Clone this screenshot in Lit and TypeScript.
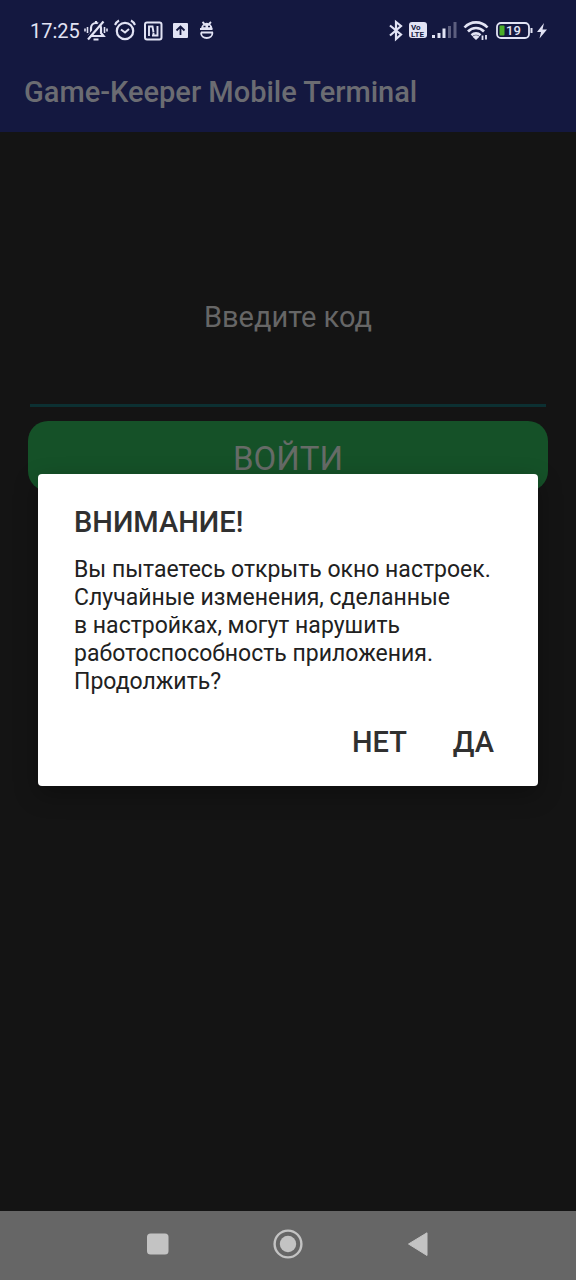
import { LitElement, html, css } from "lit";
import { customElement, state } from "lit/decorators.js";

@customElement("status-bar")
class StatusBar extends LitElement {
  static styles = css`
    :host {
      display: flex;
      justify-content: space-between;
      align-items: center;
      height: 60px;
      padding: 2px 29px 0 30px;
      box-sizing: border-box;
      color: #e2e3f4;
      font-size: 20px;
    }
    .group {
      display: flex;
      align-items: center;
      gap: 4px;
    }
    svg {
      display: block;
      fill: none;
      stroke: currentColor;
      stroke-width: 2;
    }
    .solid {
      fill: currentColor;
      stroke: none;
    }
    .badge,
    .level {
      font-family: Roboto, sans-serif;
      stroke: none;
    }
    .badge {
      fill: #141840;
      font-size: 8px;
      font-weight: 700;
    }
    .level {
      fill: currentColor;
      font-size: 13px;
      font-weight: 500;
    }
  `;

  render() {
    return html`
      <div class="group">
        <span>17:25</span>
        <svg width="24" height="24" viewBox="0 1 24 24" aria-label="Без звука">
          <path d="M4.500 18h15l-2.500-3v-5a5 5 0 0 0-10 0v5l-2.500 3M9.500 21.500h5M12 5V3" stroke-width="2.200" />
          <path d="M2.500 20.500L18 2.500" stroke="#141840" stroke-width="2.200" />
          <path d="M4 21.500L19.500 3.500" stroke-width="2.200" />
          <path d="M3.500 9v6M1 10.500v3M20.500 9v6M23 10.500v3" stroke-width="1.600" />
        </svg>
        <svg width="24" height="24" viewBox="-1 1 24 24" aria-label="Будильник">
          <circle cx="12" cy="13" r="8.200" stroke-width="2.200" />
          <path d="M2 7a9 9 0 0 1 4-4.500M22 7a9 9 0 0 0-4-4.500M8 11.500l4 3 4-3.500" />
        </svg>
        <svg width="24" height="24" viewBox="-1 1 24 24" aria-label="NFC">
          <rect x="4" y="4.500" width="16.500" height="17" rx="2" />
          <path d="M8 18V8.500h3.500l1 6M11 17.500h5.500V8M12.500 15v2.500" stroke-width="1.900" />
        </svg>
        <svg width="24" height="24" viewBox="-1 1 24 24" aria-label="Загрузка">
          <rect class="solid" x="4" y="5" width="15" height="15" rx="1" />
          <path d="M11.500 17V9M7.500 12.500l4-4 4 4" stroke="#141840" stroke-width="1.800" />
        </svg>
        <svg width="24" height="24" viewBox="0 1 24 24" aria-label="Уведомление">
          <path class="solid" d="M5 10.500a5.800 6.500 0 0 1 11.500 0z" />
          <path d="M6.500 4l2 2M15 4l-2 2M4 11h12.500M5 14.500h12M5 14.500c0 3.500 2.500 5.500 5.700 5.500s5.800-2 5.800-5.500" stroke-width="1.800" />
          <path d="M7.500 8.500h2M12 8.500h2" stroke="#141840" stroke-width="1.500" />
        </svg>
      </div>
      <div class="group">
        <svg width="16" height="24" viewBox="1 1 16 24" aria-label="Bluetooth">
          <path d="M2 7.500l11 9L8 21V4l5 4L2 17.500" stroke-width="2.200" />
        </svg>
        <svg width="18" height="24" viewBox="0 1 18 24" aria-label="VoLTE">
          <rect class="solid" x="0" y="4" width="18" height="16" rx="3" />
          <text class="badge" x="2" y="11.500">Vo</text>
          <text class="badge" x="2" y="18.500">LTE</text>
        </svg>
        <svg width="27" height="24" viewBox="0 1 27 24" aria-label="Сигнал">
          <path d="M2.500 20v-3M8 20v-5M13 20v-9.500" stroke-width="3" />
          <path d="M18.500 20V8M24 20V4" stroke-width="3" opacity="0.35" />
        </svg>
        <svg width="29" height="24" viewBox="1 1 29 24" aria-label="Wi-Fi">
          <path d="M3.500 9.500a15.500 15.500 0 0 1 23 0M7 13.500a11 11 0 0 1 16 0M10.500 17.200a6.500 6.500 0 0 1 9 0" stroke-width="2.600" />
          <path class="solid" d="M11.500 18.800a5 5 0 0 1 7 0L15 22z" />
          <path d="M21.500 22v-4.500M25 17v4.500" stroke-width="1.800" />
        </svg>
        <svg width="38" height="24" viewBox="0 1 38 24" aria-label="Заряд 19%">
          <rect x="2" y="5" width="32" height="15" rx="4" stroke-width="1.800" />
          <rect x="4.500" y="7.500" width="5" height="10" rx="1" fill="#4caf28" stroke="none" />
          <path d="M36.500 10v5" />
          <text class="level" x="11" y="17">19</text>
        </svg>
        <svg width="10" height="24" viewBox="0 1 10 24" aria-label="Зарядка">
          <path class="solid" d="M7 5L0 14h4l-1.500 6.500L10 11.500H5.500z" />
        </svg>
      </div>
    `;
  }
}

@customElement("nav-bar")
class NavBar extends LitElement {
  static styles = css`
    :host {
      display: flex;
      justify-content: center;
      align-items: center;
      gap: 82px;
      height: 69px;
      background: #666666;
    }
    button {
      display: flex;
      justify-content: center;
      width: 48px;
      padding: 8px 0 12px;
      border: 0;
      background: none;
      color: #c3c3c3;
    }
    svg {
      display: block;
      fill: currentColor;
    }
  `;

  render() {
    return html`
      <button aria-label="Недавние">
        <svg width="32" height="32" viewBox="0 0 32 32">
          <rect x="5" y="5.500" width="21.500" height="21" rx="3.500" />
        </svg>
      </button>
      <button aria-label="Домой">
        <svg width="32" height="32" viewBox="0 0 32 32">
          <circle cx="16" cy="16" r="13.400" fill="none" stroke="currentColor" stroke-width="2.400" />
          <circle cx="16" cy="16" r="8.200" />
        </svg>
      </button>
      <button aria-label="Назад">
        <svg width="32" height="32" viewBox="0 0 32 32">
          <path d="M6.500 16L25 4.800V27.500z" stroke="currentColor" stroke-linejoin="round" />
        </svg>
      </button>
    `;
  }
}

@customElement("app-root")
class AppRoot extends LitElement {
  @state() private warning = true;

  static styles = css`
    :host {
      display: flex;
      flex-direction: column;
      position: relative;
      min-height: 100vh;
      background: #141414;
      font-family: Roboto, sans-serif;
    }
    header {
      background: #141840;
    }
    h1 {
      margin: 0;
      padding: 12px 24px 20px;
      color: #6b6c72;
      font-size: 29px;
      line-height: 40px;
      font-weight: 500;
    }
    main {
      flex: 1;
      display: flex;
      flex-direction: column;
      padding: 165px 28px 0;
    }
    label {
      color: #666666;
      font-size: 29px;
      line-height: 40px;
      text-align: center;
    }
    .code {
      height: 70px;
      margin: 0 2px 14px;
      padding: 0;
      box-sizing: border-box;
      border: 0;
      border-bottom: 3px solid #0c3032;
      outline: 0;
      background: none;
      color: #666666;
      font: inherit;
      font-size: 29px;
      text-align: center;
    }
    .enter {
      height: 70px;
      padding: 4px 0 0;
      border: 0;
      border-radius: 20px;
      background: #155128;
      color: #666b67;
      font: inherit;
      font-size: 33px;
    }
    .overlay {
      position: absolute;
      inset: 0;
      display: flex;
      align-items: center;
      padding: 49px 38px 69px;
    }
    dialog {
      position: static;
      flex: 1;
      box-sizing: border-box;
      margin: 0;
      padding: 28px 25px 20px 36px;
      border: 0;
      border-radius: 4px;
      background: #ffffff;
      color: #212121;
      box-shadow: 0 8px 24px rgba(0, 0, 0, 0.3);
    }
    h2 {
      margin: 0 0 14px;
      color: #303030;
      font-size: 29px;
      line-height: 40px;
      font-weight: 500;
    }
    p {
      margin: 0;
      font-size: 23px;
      line-height: 28px;
    }
    .actions {
      display: flex;
      justify-content: flex-end;
      gap: 8px;
      margin-top: 22px;
    }
    .action {
      padding: 4px 19px;
      border: 0;
      background: none;
      color: #303030;
      font: inherit;
      font-size: 29px;
      line-height: 40px;
      font-weight: 500;
    }
  `;

  private close() {
    this.warning = false;
  }

  render() {
    return html`
      <header>
        <status-bar></status-bar>
        <h1>Game-Keeper Mobile Terminal</h1>
      </header>
      <main>
        <label for="code">Введите код</label>
        <input class="code" id="code" type="password" />
        <button class="enter">ВОЙТИ</button>
      </main>
      <nav-bar></nav-bar>
      ${this.warning
        ? html`<div class="overlay">
            <dialog open aria-labelledby="warning-title">
              <h2 id="warning-title">ВНИМАНИЕ!</h2>
              <p>
                Вы пытаетесь открыть окно настроек.<br />Случайные изменения, сделанные<br />в
                настройках, могут нарушить<br />работоспособность приложения.<br />Продолжить?
              </p>
              <div class="actions">
                <button class="action" @click=${this.close}>НЕТ</button>
                <button class="action" @click=${this.close}>ДА</button>
              </div>
            </dialog>
          </div>`
        : null}
    `;
  }
}
